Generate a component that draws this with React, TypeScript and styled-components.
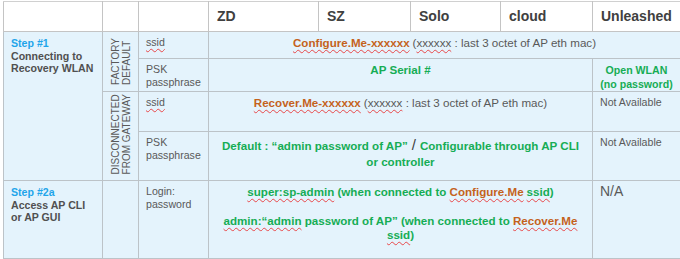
import React from 'react';
import styled, { createGlobalStyle } from 'styled-components';

const GlobalStyle = createGlobalStyle`
  html, body {
    margin: 0;
    padding: 0;
    background: #ffffff;
  }
  body {
    font-family: "Liberation Sans", Arial, sans-serif;
  }
`;

const Page = styled.div`
  padding: 1px 0 0 3px;
  width: 680px;
  height: 259px;
  box-sizing: border-box;
  overflow: hidden;
`;

const Table = styled.table`
  border-collapse: collapse;
  table-layout: fixed;
  width: 677px;
`;

const Row = styled.tr<{ $h: number }>`
  height: ${(p) => p.$h}px;
`;

const HeadCell = styled.th`
  padding: 0 0 2px 8px;
  text-align: left;
  font-size: 14px;
  font-weight: bold;
  color: #404040;
  background: #ffffff;
  border: 1px solid #c4c4c4;
  border-top-color: #d0d0d0;
`;

const Cell = styled.td<{ $center?: boolean }>`
  background: #e4f3fc;
  border: 1px solid #bcc3c8;
  vertical-align: top;
  padding: ${(p) => (p.$center ? '4px 6px 0' : '4px 0 0 7px')};
  text-align: ${(p) => (p.$center ? 'center' : 'left')};
  font-size: 10.6px;
  line-height: 13px;
  color: #595959;
`;

const SideCell = styled.td`
  background: #e4f3fc;
  border: 1px solid #bcc3c8;
  vertical-align: bottom;
  padding: 0 0 2px;
  text-align: center;
`;

const Vertical = styled.div`
  display: inline-block;
  writing-mode: vertical-rl;
  transform: rotate(180deg);
  font-size: 10px;
  line-height: 11px;
  color: #595959;
  text-align: left;
`;

const StepLabel = styled.div`
  font-size: 10.6px;
  font-weight: bold;
  line-height: 12.5px;
  color: #1ea5ea;
  padding-top: 1px;
`;

const StepText = styled.div`
  font-size: 10.6px;
  font-weight: bold;
  line-height: 12.5px;
  color: #505050;
`;

const Strong = styled.span<{ $tone: 'green' | 'orange' }>`
  font-size: 11.6px;
  font-weight: bold;
  color: ${(p) => (p.$tone === 'green' ? '#16ad55' : '#c4621c')};
`;

const Plain = styled.span`
  font-size: 11.6px;
  color: #595959;
`;

const Squiggle = styled.span`
  text-decoration: underline wavy #e8484a;
  text-decoration-thickness: 1px;
  text-underline-offset: 2px;
`;

const Slash = styled.span`
  font-size: 15px;
  font-weight: normal;
  color: #404040;
  padding: 0 4px;
`;

const Para = styled.div`
  line-height: 14.5px;
  & + & {
    margin-top: 14px;
  }
`;

const Small = styled.span`
  font-size: 10.6px;
  font-weight: bold;
  line-height: 13.5px;
  color: #16ad55;
`;

const Big = styled.span`
  font-size: 14px;
  color: #595959;
`;

const cols = [99, 36, 70, 110, 92, 90, 92, 88];

export default function App() {
  return (
    <Page>
      <GlobalStyle />
      <Table>
        <colgroup>
          {cols.map((w, i) => (
            <col key={i} style={{ width: w }} />
          ))}
        </colgroup>
        <thead>
          <Row $h={30}>
            <HeadCell />
            <HeadCell />
            <HeadCell />
            <HeadCell>ZD</HeadCell>
            <HeadCell>SZ</HeadCell>
            <HeadCell>Solo</HeadCell>
            <HeadCell>cloud</HeadCell>
            <HeadCell>Unleashed</HeadCell>
          </Row>
        </thead>
        <tbody>
          <Row $h={27}>
            <Cell rowSpan={4}>
              <StepLabel>Step #1</StepLabel>
              <StepText>
                Connecting to
                <br />
                Recovery WLAN
              </StepText>
            </Cell>
            <SideCell rowSpan={2}>
              <Vertical>
                FACTORY
                <br />
                DEFAULT
              </Vertical>
            </SideCell>
            <Cell>
              <Squiggle>ssid</Squiggle>
            </Cell>
            <Cell colSpan={5} $center>
              <Strong $tone="orange">
                <Squiggle>Configure.Me-xxxxxx</Squiggle>
              </Strong>{' '}
              <Plain>
                (<Squiggle>xxxxxx</Squiggle> : last 3 octet of AP eth mac)
              </Plain>
            </Cell>
          </Row>
          <Row $h={33}>
            <Cell>
              PSK
              <br />
              passphrase
            </Cell>
            <Cell colSpan={4} $center>
              <Strong $tone="green">AP Serial #</Strong>
            </Cell>
            <Cell $center style={{ padding: '5px 0 0' }}>
              <Small>
                Open WLAN
                <br />
                (no password)
              </Small>
            </Cell>
          </Row>
          <Row $h={40}>
            <SideCell rowSpan={2}>
              <Vertical>
                DISCONNECTED
                <br />
                FROM GATEWAY
              </Vertical>
            </SideCell>
            <Cell>
              <Squiggle>ssid</Squiggle>
            </Cell>
            <Cell colSpan={4} $center>
              <Strong $tone="orange">
                <Squiggle>Recover.Me-xxxxxx</Squiggle>
              </Strong>{' '}
              <Plain>
                (<Squiggle>xxxxxx</Squiggle> : last 3 octet of AP eth mac)
              </Plain>
            </Cell>
            <Cell>Not Available</Cell>
          </Row>
          <Row $h={49}>
            <Cell>
              PSK
              <br />
              passphrase
            </Cell>
            <Cell colSpan={4} $center style={{ paddingTop: 5, lineHeight: '15px' }}>
              <Strong $tone="green">
                Default : “admin password of AP”
                <Slash>/</Slash>
                Configurable through AP CLI
                <br />
                or controller
              </Strong>
            </Cell>
            <Cell>Not Available</Cell>
          </Row>
          <Row $h={78}>
            <Cell>
              <StepLabel>Step #2a</StepLabel>
              <StepText>
                Access AP CLI
                <br />
                or AP GUI
              </StepText>
            </Cell>
            <Cell />
            <Cell>
              Login:
              <br />
              password
            </Cell>
            <Cell colSpan={4} $center>
              <Para>
                <Strong $tone="green">
                  <Squiggle>super:sp-admin</Squiggle> (when connected to{' '}
                </Strong>
                <Strong $tone="orange">
                  <Squiggle>Configure.Me</Squiggle>
                </Strong>{' '}
                <Strong $tone="green">
                  <Squiggle>ssid</Squiggle>)
                </Strong>
              </Para>
              <Para>
                <Strong $tone="green">
                  <Squiggle>admin:“admin</Squiggle> password of AP” (when connected to{' '}
                </Strong>
                <Strong $tone="orange">
                  <Squiggle>Recover.Me</Squiggle>
                </Strong>
                <br />
                <Strong $tone="green">
                  <Squiggle>ssid</Squiggle>)
                </Strong>
              </Para>
            </Cell>
            <Cell>
              <Big>N/A</Big>
            </Cell>
          </Row>
        </tbody>
      </Table>
    </Page>
  );
}
